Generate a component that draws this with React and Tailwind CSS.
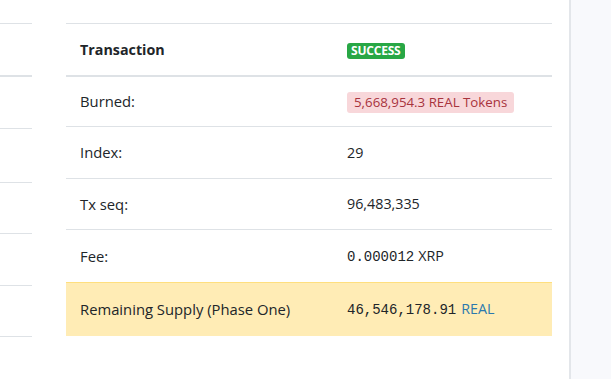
export default function App() {
  const sans = { fontFamily: '"Open Sans", "Noto Sans", sans-serif' };
  const mono = { fontFamily: '"Liberation Mono", "DejaVu Sans Mono", monospace' };
  return (
    <div className="w-[611px] h-[379px] bg-white flex overflow-hidden text-[#212529]" style={sans}>
      {/* left table fragment */}
      <div className="w-[32px] shrink-0 pt-[23px]">
        <div className="border-t border-[#dee2e6] h-[52px]" />
        <div className="border-t-2 border-[#dee2e6] h-[53px]" />
        <div className="border-t border-[#dee2e6] h-[54px]" />
        <div className="border-t border-[#dee2e6] h-[51px]" />
        <div className="border-t border-[#dee2e6] h-[52px]" />
        <div className="border-t border-[#dee2e6] h-[51px]" />
        <div className="border-t border-[#dee2e6] h-[1px]" />
      </div>
      {/* main table */}
      <div className="w-[486px] shrink-0 ml-[34px] pt-[23px] text-[14.8px]">
        <div className="border-t border-[#dee2e6] h-[52px] flex items-center">
          <div className="w-[281px] pl-[14px] font-bold text-[14.3px]">Transaction</div>
          <div>
            <span className="inline-block bg-[#28a745] text-white text-[12px] font-bold leading-[16px] px-[4px] rounded-[3px] tracking-[-0.2px]">SUCCESS</span>
          </div>
        </div>
        <div className="border-t-2 border-[#dee2e6] h-[51px] flex items-center">
          <div className="w-[281px] pl-[14px]">Burned:</div>
          <div>
            <span className="inline-block bg-[#f8d7da] text-[#a8333d] text-[13.3px] leading-[21px] px-[7px] rounded-[3px]">5,668,954.3 REAL Tokens</span>
          </div>
        </div>
        <div className="border-t border-[#dee2e6] h-[52px] flex items-center">
          <div className="w-[281px] pl-[14px]">Index:</div>
          <div className="text-[14.3px]">29</div>
        </div>
        <div className="border-t border-[#dee2e6] h-[51px] flex items-center">
          <div className="w-[281px] pl-[14px]">Tx seq:</div>
          <div className="text-[14.3px]">96,483,335</div>
        </div>
        <div className="border-t border-[#dee2e6] h-[53px] flex items-center">
          <div className="w-[281px] pl-[14px]">Fee:</div>
          <div className="text-[14.3px] flex items-baseline">
            <span style={mono} className="text-[14px]">0.000012</span>
            <span className="ml-[4px]">XRP</span>
          </div>
        </div>
        <div className="border-t border-[#ffdf7e] bg-[#ffecb5] h-[54px] flex items-center">
          <div className="w-[281px] pl-[14px]">Remaining Supply (Phase One)</div>
          <div className="text-[14.3px] flex items-baseline">
            <span style={mono} className="text-[14px]">46,546,178.91</span>
            <span className="ml-[5px] text-[#2c79ad]">REAL</span>
          </div>
        </div>
      </div>
      {/* right panel */}
      <div className="ml-[17px] flex-1 border-l-2 border-[#e3e6ea] bg-[#f8f9fc]" />
    </div>
  );
}
